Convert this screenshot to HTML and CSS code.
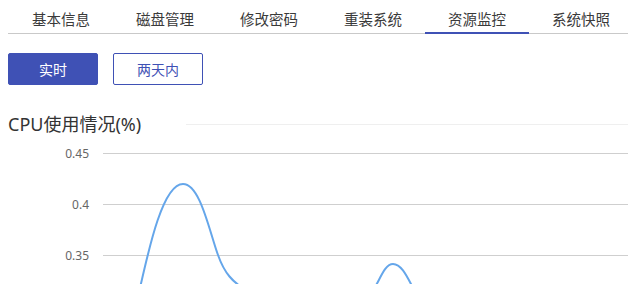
FILE: index.html
```html
<!DOCTYPE html>
<html lang="zh-CN">
<head>
<meta charset="utf-8">
<title>资源监控</title>
<link rel="stylesheet" href="styles.css">
</head>
<body>
<div class="page">
  <nav class="tabs">
    <div class="tab">基本信息</div>
    <div class="tab">磁盘管理</div>
    <div class="tab">修改密码</div>
    <div class="tab">重装系统</div>
    <div class="tab active">资源监控</div>
    <div class="tab">系统快照</div>
  </nav>
  <div class="btns">
    <button class="btn primary">实时</button>
    <button class="btn outline">两天内</button>
  </div>
  <div class="title-row">
    <h2 class="title">CPU使用情况(%)</h2>
    <div class="title-line"></div>
  </div>
  <svg class="chart" width="620" height="143" viewBox="8 141 620 143">
    <g class="grid">
      <line x1="103" y1="153.5" x2="628" y2="153.5"/>
      <line x1="103" y1="204.5" x2="628" y2="204.5"/>
      <line x1="103" y1="255.5" x2="628" y2="255.5"/>
    </g>
    <g class="ylabels">
      <text x="89" y="158">0.45</text>
      <text x="89" y="209">0.4</text>
      <text x="89" y="260">0.35</text>
    </g>
    <path class="series" d="M135,310 C145,268 160,184 183,184 C200,184 209,230 218,255 C224,272 232,283 250,292 C280,305 350,305 365,300 C378,290 382,264 393,264 C404,264 410,285 420,300"/>
  </svg>
</div>
</body>
</html>
```

FILE: styles.css
```css
html, body {
  margin: 0;
  padding: 0;
  background: #fff;
}
body {
  font-family: "Noto Sans", "Noto Sans CJK SC", sans-serif;
  color: #333;
  overflow: hidden;
}
.page {
  padding-left: 8px;
}
.tabs {
  display: flex;
  height: 33px;
  border-bottom: 1px solid #c9c9c9;
  padding-left: 1px;
}
.tab {
  flex: none;
  width: 104px;
  height: 34px;
  box-sizing: border-box;
  margin-bottom: -1px;
  border-bottom: 2px solid transparent;
  padding-top: 4px;
  display: flex;
  align-items: center;
  justify-content: center;
  font-family: "Noto Sans CJK SC", sans-serif;
  font-size: 14.5px;
  color: #3a3a3a;
}
.tab.active {
  border-bottom-color: #3f51b5;
}
.btns {
  display: flex;
  gap: 15px;
  margin-top: 19px;
}
.btn {
  width: 90px;
  height: 32px;
  box-sizing: border-box;
  border-radius: 2px;
  font-family: "Noto Sans CJK SC", sans-serif;
  font-size: 14px;
  padding: 0;
  cursor: pointer;
}
.btn.primary {
  background: #3f51b5;
  border: 1px solid #3f51b5;
  color: #fff;
}
.btn.outline {
  background: #fff;
  border: 1px solid #3f51b5;
  color: #3f51b5;
}
.title-row {
  display: flex;
  align-items: center;
  height: 36px;
  margin-top: 20px;
}
.title {
  margin: 0;
  font-size: 18px;
  font-weight: normal;
  color: #333;
  white-space: nowrap;
}
.title-line {
  flex: 1;
  height: 1px;
  background: #efefef;
  margin-left: 45px;
  margin-top: 2px;
}
.chart {
  display: block;
}
.grid line {
  stroke: #cfcfcf;
  stroke-width: 1;
}
.ylabels text {
  font-family: "Noto Sans", sans-serif;
  font-size: 12px;
  fill: #666;
  text-anchor: end;
}
.series {
  fill: none;
  stroke: #65a6ea;
  stroke-width: 2;
}
```
